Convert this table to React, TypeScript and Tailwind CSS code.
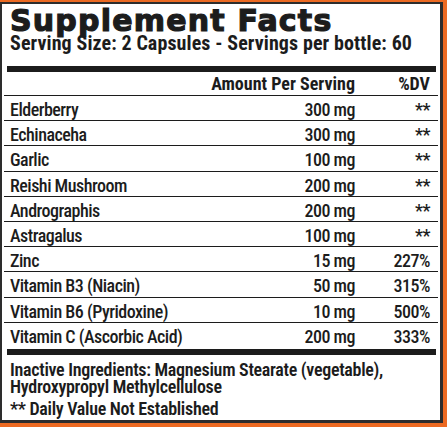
const rows = [
  { name: "Elderberry", amount: "300 mg", dv: "**" },
  { name: "Echinaceha", amount: "300 mg", dv: "**" },
  { name: "Garlic", amount: "100 mg", dv: "**" },
  { name: "Reishi Mushroom", amount: "200 mg", dv: "**" },
  { name: "Andrographis", amount: "200 mg", dv: "**" },
  { name: "Astragalus", amount: "100 mg", dv: "**" },
  { name: "Zinc", amount: "15 mg", dv: "227%" },
  { name: "Vitamin B3 (Niacin)", amount: "50 mg", dv: "315%" },
  { name: "Vitamin B6 (Pyridoxine)", amount: "10 mg", dv: "500%" },
  { name: "Vitamin C (Ascorbic Acid)", amount: "200 mg", dv: "333%" },
];

export default function App() {
  return (
    <div className="w-[447px] h-[427px] bg-[#ec6a22] pt-[2px] pr-[4px] pb-[4px]">
      <div className="h-full bg-white border-t-2 border-l-2 border-r-[3px] border-b-[3px] border-[#2d2d2d] text-[#1c1c1c] font-['Roboto_Condensed',Roboto,sans-serif] [font-stretch:condensed]">
        <h1 className="mt-[3px] pl-[8px] font-['DejaVu_Sans',sans-serif] [font-stretch:normal] font-bold text-[30px] leading-[27px] tracking-[1.2px] [-webkit-text-stroke:1.2px_#1c1c1c]">
          Supplement Facts
        </h1>
        <p className="pl-[8px] font-bold text-[20px] leading-[18px] tracking-[0.1px]">
          Serving Size: 2 Capsules - Servings per bottle: 60
        </p>
        <div className="mt-[14px] ml-[5px] mr-[4px] h-[6px] bg-[#1c1c1c]" />

        <div className="flex h-[24px] pt-[1px] pr-[8px] border-b border-[#1c1c1c] mx-[2px] font-bold text-[18px] leading-[21px]">
          <span className="flex-1" />
          <span className="w-[160px] text-right">Amount Per Serving</span>
          <span className="w-[75px] text-right">%DV</span>
        </div>

        {rows.map((r, i) => (
          <div
            key={r.name}
            className={
              i < rows.length - 1
                ? "flex h-[25.2px] pt-[3px] pl-[6px] pr-[8px] mx-[2px] border-b border-[#1c1c1c] font-medium text-[18px] leading-[21px] tracking-[-0.5px]"
                : "flex h-[25px] pt-[3px] pl-[6px] pr-[8px] mx-[2px] font-medium text-[18px] leading-[21px] tracking-[-0.5px]"
            }
          >
            <span className="flex-1">{r.name}</span>
            <span className="w-[100px] text-right">{r.amount}</span>
            <span className="w-[75px] text-right">{r.dv}</span>
          </div>
        ))}

        <div className="mt-[1px] ml-[5px] mr-[4px] h-[6px] bg-[#1c1c1c]" />

        <div className="mt-[6px] pl-[8px] font-semibold text-[18px] leading-[17px] tracking-[-0.3px]">
          <p>
            Inactive Ingredients: Magnesium Stearate (vegetable),
            <br />
            Hydroxypropyl Methylcellulose
          </p>
          <p className="mt-[5px]">** Daily Value Not Established</p>
        </div>
      </div>
    </div>
  );
}
